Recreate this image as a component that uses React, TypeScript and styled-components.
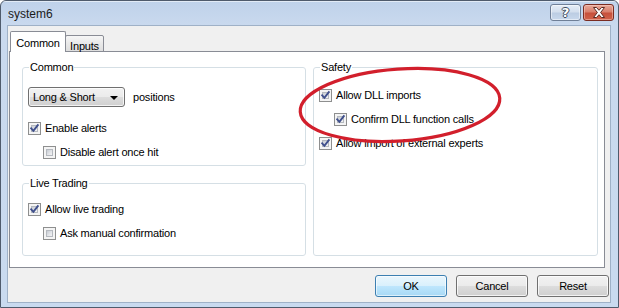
import React from "react";
import styled, { createGlobalStyle, css } from "styled-components";

const Global = createGlobalStyle`
  html, body { margin: 0; padding: 0; background: #ffffff; }
  body { font-family: "Liberation Sans", Arial, sans-serif; font-size: 11px; color: #000; }
  * { box-sizing: border-box; }
`;

const Window = styled.div`
  width: 619px;
  height: 308px;
  display: flex;
  flex-direction: column;
  border: 1px solid #4f5b6c;
  border-radius: 6px 6px 0 0;
  background: linear-gradient(180deg, #bfd2ea 0px, #c9d9ee 24px, #c9daef 100%);
  overflow: hidden;
`;

const TitleBar = styled.div`
  height: 24px;
  flex: none;
  display: flex;
  align-items: flex-start;
  padding: 0 4px 0 7px;
  box-shadow: inset 0 1px 0 rgba(255, 255, 255, 0.55);
`;

const Title = styled.span`
  font-family: "Liberation Sans", Arial, sans-serif;
  font-size: 12px;
  color: #1b1b1b;
  line-height: 14px;
  margin-top: 6px;
  flex: 1;
`;

const CaptionButtons = styled.div`
  display: flex;
  gap: 2px;
  margin-top: 3px;
`;

const captionBase = css`
  width: 31px;
  height: 17px;
  border-radius: 3px;
  display: flex;
  align-items: center;
  justify-content: center;
`;

const HelpButton = styled.div`
  ${captionBase};
  border: 1px solid #6f7f97;
  background: linear-gradient(180deg, #e6edf6 0%, #d3dfee 45%, #bccde3 55%, #c8d8ec 100%);
  box-shadow: inset 0 0 0 1px rgba(255, 255, 255, 0.5);
  color: #ffffff;
  font-family: "DejaVu Sans", sans-serif;
  font-weight: bold;
  font-size: 13px;
  line-height: 13px;
  text-shadow: 1px 0 0 #3e4b5e, -1px 0 0 #3e4b5e, 0 1px 0 #3e4b5e, 0 -1px 0 #3e4b5e;
`;

const CloseButton = styled.div`
  ${captionBase};
  border: 1px solid #7a2c22;
  background: linear-gradient(180deg, #e8a999 0%, #d9806d 45%, #c7503b 55%, #d0624b 100%);
  box-shadow: inset 0 0 0 1px rgba(255, 220, 210, 0.45);
`;

const Client = styled.div`
  flex: 1;
  margin: 0 7px 4px 6px;
  border: 1px solid #9fb1c7;
  background: #f0f0f0;
  display: flex;
  flex-direction: column;
  padding-top: 5px;
`;

const TabStrip = styled.div`
  height: 21px;
  margin: 0 0 -1px 2px;
  display: flex;
  align-items: flex-end;
  position: relative;
  z-index: 1;
`;

const Tab = styled.div<{ $active?: boolean }>`
  border: 1px solid #898c95;
  border-bottom: none;
  border-radius: 2px 2px 0 0;
  display: flex;
  justify-content: center;
  font-size: 11px;
  letter-spacing: -0.2px;
  ${(p) =>
    p.$active
      ? css`
          height: 21px;
          width: 56px;
          background: #ffffff;
          padding-top: 5px;
          z-index: 2;
        `
      : css`
          height: 17px;
          width: 39px;
          margin-left: -1px;
          border-bottom: 1px solid #898c95;
          background: linear-gradient(180deg, #f6f6f6 0%, #e9e9e9 50%, #dedede 100%);
          padding-top: 4px;
        `}
`;

const TabPanel = styled.div`
  position: relative;
  margin: 0 5px 0 1px;
  height: 217px;
  border: 1px solid #898c95;
  background: #ffffff;
  padding: 9px 6px 11px 12px;
  display: grid;
  grid-template-columns: 284px 285px;
  column-gap: 7px;
`;

const Column = styled.div`
  display: flex;
  flex-direction: column;
  gap: 11px;
`;

const Group = styled.fieldset<{ $fill?: boolean; $padBottom?: number }>`
  margin: 0;
  border: 1px solid #d5dfe5;
  border-radius: 3px;
  padding: 0 5px ${(p) => p.$padBottom ?? 0}px 5px;
  min-width: 0;
  ${(p) => p.$fill && "flex: 1;"}
`;

const Legend = styled.legend`
  padding: 0 1px;
  margin-left: 1px;
  font-size: 11px;
  line-height: 13px;
  letter-spacing: -0.2px;
`;

const Rows = styled.div<{ $top: number }>`
  padding-top: ${(p) => p.$top}px;
  display: flex;
  flex-direction: column;
`;

const Row = styled.div<{ $indent?: boolean }>`
  height: 24px;
  display: flex;
  align-items: center;
  gap: 4px;
  padding-left: ${(p) => (p.$indent ? 15 : 0)}px;
  font-size: 11px;
  letter-spacing: -0.2px;
  white-space: nowrap;
`;

const ComboRow = styled.div`
  display: flex;
  align-items: center;
  gap: 8px;
  height: 20px;
  margin-bottom: 9px;
  font-size: 11px;
  letter-spacing: -0.2px;
`;

const winButton = css`
  border: 1px solid #707070;
  border-radius: 3px;
  background: linear-gradient(180deg, #f2f2f2 0%, #ebebeb 50%, #dddddd 51%, #cfcfcf 100%);
  box-shadow: inset 0 0 0 1px rgba(255, 255, 255, 0.75);
`;

const Combo = styled.div`
  ${winButton};
  width: 97px;
  height: 20px;
  display: flex;
  align-items: center;
  padding: 0 6px 0 4px;
  justify-content: space-between;
`;

const Arrow = styled.span`
  width: 0;
  height: 0;
  border-left: 4px solid transparent;
  border-right: 4px solid transparent;
  border-top: 4px solid #000;
  margin-top: 1px;
`;

const Box = styled.span`
  position: relative;
  width: 13px;
  height: 13px;
  flex: none;
  border: 1px solid #8e8f8f;
  background: #f4f4f4;
  padding: 2px;
  display: flex;
`;

const BoxFill = styled.span`
  flex: 1;
  background: linear-gradient(135deg, #c6cbd2 0%, #e2e4e8 55%, #f3f3f4 100%);
  border: 1px solid #b5b9bf;
`;

const CheckMark = styled.svg`
  position: absolute;
  left: 0;
  top: 0;
`;

const Highlight = styled.svg`
  position: absolute;
  left: 0;
  top: 0;
  pointer-events: none;
`;

const ButtonRow = styled.div`
  margin-top: 7px;
  padding-right: 1px;
  display: flex;
  justify-content: flex-end;
  gap: 9px;
`;

const PushButton = styled.div<{ $default?: boolean }>`
  ${winButton};
  width: 72px;
  height: 22px;
  display: flex;
  align-items: center;
  justify-content: center;
  font-size: 11px;
  letter-spacing: -0.2px;
  ${(p) =>
    p.$default &&
    css`
      border-color: #3c7fb1;
      background: linear-gradient(180deg, #eaf6fd 0%, #d9f0fc 50%, #bee6fd 51%, #a7d9f5 100%);
      box-shadow: inset 0 0 0 1px rgba(255, 255, 255, 0.6);
    `}
`;

function Check({ checked, label, indent }: { checked?: boolean; label: string; indent?: boolean }) {
  return (
    <Row $indent={indent}>
      <Box>
        <BoxFill />
        {checked && (
          <CheckMark width="11" height="11" viewBox="0 0 11 11">
            <path d="M2.2 5.4 L4.4 7.8 L8.8 2.2" fill="none" stroke="#3f4f8c" strokeWidth="1.9" strokeLinecap="square" strokeLinejoin="miter" />
          </CheckMark>
        )}
      </Box>
      <span>{label}</span>
    </Row>
  );
}

export default function App() {
  return (
    <>
      <Global />
      <Window>
        <TitleBar>
          <Title>system6</Title>
          <CaptionButtons>
            <HelpButton>?</HelpButton>
            <CloseButton>
              <svg width="14" height="11" viewBox="0 0 14 11">
                <path
                  d="M1.5 0.5 H4.5 L7 3.3 L9.5 0.5 H12.5 L8.6 5.5 L12.5 10.5 H9.5 L7 7.7 L4.5 10.5 H1.5 L5.4 5.5 Z"
                  fill="#ffffff"
                  stroke="#5b2a22"
                  strokeWidth="1"
                  strokeLinejoin="round"
                />
              </svg>
            </CloseButton>
          </CaptionButtons>
        </TitleBar>
        <Client>
          <TabStrip>
            <Tab $active>Common</Tab>
            <Tab>Inputs</Tab>
          </TabStrip>
          <TabPanel>
            <Column>
              <Group $padBottom={1}>
                <Legend>Common</Legend>
                <Rows $top={13}>
                  <ComboRow>
                    <Combo>
                      <span>Long &amp; Short</span>
                      <Arrow />
                    </Combo>
                    <span>positions</span>
                  </ComboRow>
                  <Check checked label="Enable alerts" />
                  <Check indent label="Disable alert once hit" />
                </Rows>
              </Group>
              <Group $fill>
                <Legend>Live Trading</Legend>
                <Rows $top={7}>
                  <Check checked label="Allow live trading" />
                  <Check indent label="Ask manual confirmation" />
                </Rows>
              </Group>
            </Column>
            <Column>
              <Group $fill>
                <Legend>Safety</Legend>
                <Rows $top={9}>
                  <Check checked label="Allow DLL imports" />
                  <Check checked indent label="Confirm DLL function calls" />
                  <Check checked label="Allow import of external experts" />
                </Rows>
              </Group>
            </Column>
            <Highlight width="594" height="215" viewBox="0 0 594 215">
              <ellipse
                cx="390"
                cy="53"
                rx="100"
                ry="36"
                transform="rotate(-4 390 53)"
                fill="none"
                stroke="#d21f2c"
                strokeWidth="3.2"
              />
            </Highlight>
          </TabPanel>
          <ButtonRow>
            <PushButton $default>OK</PushButton>
            <PushButton>Cancel</PushButton>
            <PushButton>Reset</PushButton>
          </ButtonRow>
        </Client>
      </Window>
    </>
  );
}
